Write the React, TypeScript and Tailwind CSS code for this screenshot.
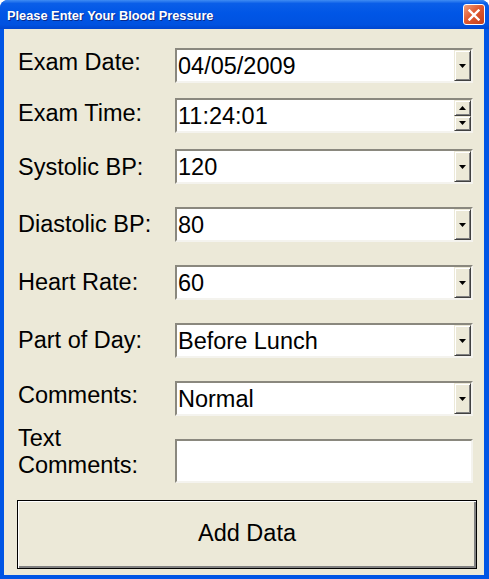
import React from "react"

// Windows XP style "Please Enter Your Blood Pressure" dialog

const fields = [
  { label: "Exam Date:", value: "04/05/2009", kind: "combo", rowGap: "mt-[19px]", labelTop: "mt-[1px]" },
  { label: "Exam Time:", value: "11:24:01", kind: "spin", rowGap: "mt-[15px]", labelTop: "mt-[2px]" },
  { label: "Systolic BP:", value: "120", kind: "combo", rowGap: "mt-[16px]", labelTop: "mt-[5px]" },
  { label: "Diastolic BP:", value: "80", kind: "combo", rowGap: "mt-[23px]", labelTop: "mt-[4px]" },
  { label: "Heart Rate:", value: "60", kind: "combo", rowGap: "mt-[23px]", labelTop: "mt-[4px]" },
  { label: "Part of Day:", value: "Before Lunch", kind: "combo", rowGap: "mt-[23px]", labelTop: "mt-[4px]" },
  { label: "Comments:", value: "Normal", kind: "combo", rowGap: "mt-[23px]", labelTop: "mt-[1px]" },
]

const raised =
  "bg-[#ece9d8] border border-t-[#ece9d8] border-l-[#ece9d8] border-r-[#404040] border-b-[#404040] shadow-[inset_1px_1px_0_#ffffff,inset_-1px_-1px_0_#808080]"

function Arrow({ up = false }: { up?: boolean }) {
  return (
    <svg width="7" height="4" viewBox="0 0 7 4" className="block">
      {up ? <polygon points="3.5,0 7,4 0,4" fill="#000" /> : <polygon points="0,0 7,0 3.5,4" fill="#000" />}
    </svg>
  )
}

function DropButton() {
  return (
    <div className={`w-[17px] h-full flex items-center justify-center ${raised}`}>
      <Arrow />
    </div>
  )
}

function SpinButtons() {
  return (
    <div className="w-[17px] h-full flex flex-col">
      <div className={`flex-1 flex items-center justify-center ${raised}`}>
        <Arrow up />
      </div>
      <div className={`flex-1 flex items-center justify-center ${raised}`}>
        <Arrow />
      </div>
    </div>
  )
}

function Field({ value, kind }: { value: string; kind: string }) {
  return (
    <div className="w-[298px] h-[35px] shrink-0 bg-white border-2 border-t-[#8a887e] border-l-[#8a887e] border-r-[#f4f3ee] border-b-[#f4f3ee] flex">
      <div className="flex-1 flex items-center pl-[1px] pt-[1px] leading-[26px] text-black">{value}</div>
      {kind === "spin" ? <SpinButtons /> : <DropButton />}
    </div>
  )
}

function CloseButton() {
  return (
    <div className="w-[22px] h-[21px] rounded-[3px] border border-white bg-[linear-gradient(to_bottom_right,#f0a07e,#e05a32_45%,#c43f1a)] flex items-center justify-center">
      <svg width="12" height="12" viewBox="0 0 12 12">
        <path d="M1.5 1.5 L10.5 10.5 M10.5 1.5 L1.5 10.5" stroke="#fff" strokeWidth="2.4" strokeLinecap="square" />
      </svg>
    </div>
  )
}

export default function App() {
  return (
    <div className="w-[489px] h-[579px] flex flex-col bg-[#0055e5] rounded-t-[8px] overflow-hidden font-['Liberation_Sans',Arial,sans-serif]">
      {/* Title bar */}
      <div className="h-[29px] shrink-0 flex items-center justify-between pl-[7px] pr-[4px] bg-[linear-gradient(to_bottom,#3f8cf3_0%,#0a5ee8_12%,#0056e6_45%,#0052e0_85%,#0046cf_100%)]">
        <span className="pt-[2px] text-[12.8px] font-bold text-white leading-[14px] [text-shadow:1px_1px_0_#0a2a8a]">
          Please Enter Your Blood Pressure
        </span>
        <CloseButton />
      </div>

      {/* Client area */}
      <div className="flex-1 ml-[4px] mr-[5px] mb-[4px] bg-[#ece9d8] flex flex-col text-[23.5px] text-black">
        {fields.map((f) => (
          <div key={f.label} className={`flex items-start ${f.rowGap}`}>
            <div className={`w-[171px] shrink-0 pl-[14px] leading-[26px] whitespace-nowrap ${f.labelTop}`}>{f.label}</div>
            <Field value={f.value} kind={f.kind} />
          </div>
        ))}

        <div className="flex items-start mt-[9px]">
          <div className="w-[171px] shrink-0 pl-[14px] leading-[27px]">
            <div>Text</div>
            <div>Comments:</div>
          </div>
          <div className="mt-[14px] w-[298px] h-[44px] shrink-0 bg-white border-2 border-t-[#8a887e] border-l-[#8a887e] border-r-[#f4f3ee] border-b-[#f4f3ee]" />
        </div>

        <div className="mt-[17px] ml-[13px] w-[460px] h-[69px] border border-black bg-[#ece9d8] shadow-[inset_1px_1px_0_#ffffff,inset_-2px_-2px_0_#808080] flex items-center justify-center">
          <span className="leading-[26px] -mt-[4px]">Add Data</span>
        </div>
      </div>
    </div>
  )
}
